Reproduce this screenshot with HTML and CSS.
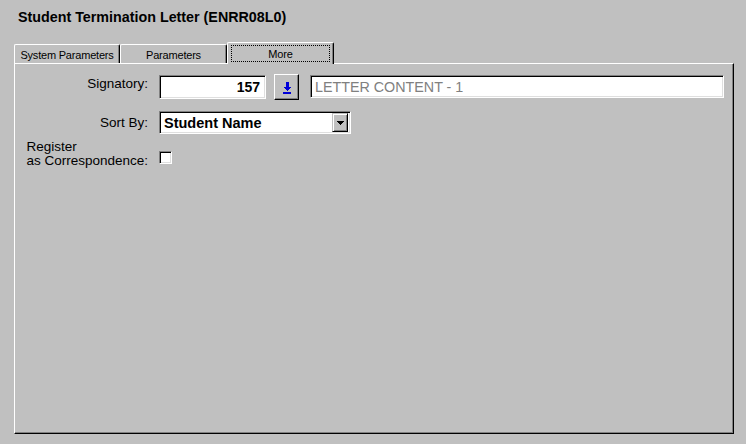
FILE: index.html
```html
<!DOCTYPE html>
<html lang="en">
<head>
    <meta charset="UTF-8">
    <title>Student Termination Letter (ENRR08L0)</title>
    <link rel="stylesheet" href="styles.css">
</head>
<body>
    <div class="window">
        <h1 class="title">Student Termination Letter (ENRR08L0)</h1>

        <div class="tabs">
            <div class="tab">System Parameters</div>
            <div class="tab tab-wide">Parameters</div>
            <div class="tab tab-wide active"><span class="focus">More</span></div>
        </div>

        <div class="panel">
            <!-- Signatory -->
            <div class="row row-top">
                <div class="label label-sig">Signatory:</div>
                <div class="field field-num">157</div>
                <button class="lookup">
                    <svg viewBox="0 0 8 12" width="8" height="12" shape-rendering="crispEdges">
                        <rect x="2.5" y="0" width="3" height="5" fill="#0000d8"/>
                        <polygon points="0,5 8,5 4,9" fill="#0000d8"/>
                        <rect x="0" y="10" width="8" height="2" fill="#0000d8"/>
                    </svg>
                </button>
                <div class="field field-desc">LETTER CONTENT - 1</div>
            </div>

            <!-- Sort -->
            <div class="row row-sort">
                <div class="label">Sort By:</div>
                <div class="field select">
                    <span class="select-value">Student Name</span>
                    <span class="select-btn">
                        <svg viewBox="0 0 7 4" width="7" height="4" shape-rendering="crispEdges">
                            <polygon points="0,0 7,0 3.5,4" fill="#000"/>
                        </svg>
                    </span>
                </div>
            </div>

            <!-- Register -->
            <div class="row row-check">
                <div class="label label-multi">Register<br>as Correspondence:</div>
                <span class="checkbox"></span>
            </div>
        </div>
    </div>
</body>
</html>
```

FILE: styles.css
```css
:root {
    --face: #c0c0c0;
    --shadow: #808080;
    --dark: #000000;
    --light: #ffffff;
    --text: #000000;
}
html, body {
    margin: 0;
    padding: 0;
    height: 100%;
}
body {
    background-color: var(--face);
    color: var(--text);
    font-family: 'Liberation Sans', Arial, sans-serif;
}
.window {
    height: 100%;
    display: flex;
    flex-direction: column;
    box-sizing: border-box;
    padding: 0 12px 10px 14px;
}
.title {
    margin: 0;
    padding: 10px 0 0 4px;
    font-size: 14.3px;
    line-height: 15px;
    font-weight: bold;
}

/* tabs */
.tabs {
    display: flex;
    align-items: flex-end;
    height: 21px;
    margin-top: 17px;
}
.tab {
    width: 106px;
    height: 19px;
    box-sizing: border-box;
    border-top: 1px solid var(--light);
    border-left: 1px solid var(--light);
    border-right: 1px solid var(--dark);
    border-radius: 2px 2px 0 0;
    box-shadow: inset -1px 0 0 var(--shadow);
    font-size: 11px;
    letter-spacing: -0.2px;
    display: flex;
    align-items: center;
    justify-content: center;
    padding-top: 1px;
}
.tab-wide {
    width: 107px;
}
.tab.active {
    height: 22px;
    margin-bottom: -1px;
    position: relative;
    z-index: 1;
    background-color: var(--face);
    align-items: flex-start;
    padding: 2px 3px 0 3px;
}
.focus {
    flex: 1;
    height: 17px;
    box-sizing: border-box;
    border: 1px dotted var(--dark);
    display: flex;
    align-items: center;
    justify-content: center;
}

/* panel */
.panel {
    flex: 1;
    box-sizing: border-box;
    border-top: 1px solid var(--light);
    border-left: 1px solid var(--light);
    border-right: 1px solid var(--dark);
    border-bottom: 1px solid var(--dark);
    box-shadow: inset -1px -1px 0 var(--shadow);
    padding-top: 10px;
}
.row {
    display: flex;
}
.row-top {
    align-items: flex-start;
}
.row-sort {
    align-items: center;
    margin-top: 11px;
}
.row-check {
    align-items: flex-end;
    margin-top: 6px;
}
.label {
    width: 133px;
    margin-right: 11px;
    font-size: 13.5px;
    line-height: 15px;
    text-align: right;
    flex-shrink: 0;
}
.label-sig {
    margin-top: 2px;
}
.label-multi {
    display: flex;
    justify-content: flex-end;
    text-align: left;
    line-height: 14px;
}

/* sunken fields */
.field {
    box-sizing: border-box;
    background-color: var(--light);
    border-top: 1px solid var(--shadow);
    border-left: 1px solid var(--shadow);
    border-right: 1px solid var(--light);
    border-bottom: 1px solid var(--light);
    box-shadow: inset 1px 1px 0 var(--dark), inset -1px -1px 0 #dfdfdf;
    font-size: 14px;
    line-height: 20px;
}
.field-num {
    width: 107px;
    height: 24px;
    margin-top: 1px;
    padding: 1px 5px 0 0;
    text-align: right;
    font-weight: bold;
}
.field-desc {
    width: 414px;
    height: 23px;
    margin-top: 1px;
    margin-left: 11px;
    padding: 1px 0 0 4px;
    color: var(--shadow);
    font-size: 14.3px;
}
.lookup {
    width: 25px;
    height: 26px;
    margin: 0 0 0 8px;
    padding: 0;
    box-sizing: border-box;
    background-color: var(--face);
    border-top: 1px solid var(--light);
    border-left: 1px solid var(--light);
    border-right: 1px solid var(--dark);
    border-bottom: 1px solid var(--dark);
    box-shadow: inset -1px -1px 0 var(--shadow);
    display: flex;
    align-items: center;
    justify-content: center;
}
.lookup svg {
    display: block;
    margin-top: 1px;
}

/* select */
.select {
    width: 192px;
    height: 23px;
    display: flex;
    align-items: center;
    justify-content: space-between;
    padding: 0 2px 0 4px;
    font-weight: bold;
    font-size: 14.5px;
}
.select-btn {
    width: 16px;
    height: 19px;
    box-sizing: border-box;
    background-color: var(--face);
    border-top: 1px solid var(--face);
    border-left: 1px solid var(--face);
    border-right: 1px solid var(--dark);
    border-bottom: 1px solid var(--dark);
    box-shadow: inset 1px 1px 0 var(--light), inset -1px -1px 0 var(--shadow);
    display: flex;
    align-items: center;
    justify-content: center;
}
.select-btn svg {
    display: block;
}

/* checkbox */
.checkbox {
    width: 13px;
    height: 13px;
    margin-bottom: 4px;
    box-sizing: border-box;
    background-color: var(--light);
    border-top: 1px solid var(--shadow);
    border-left: 1px solid var(--shadow);
    border-right: 1px solid var(--light);
    border-bottom: 1px solid var(--light);
    box-shadow: inset 1px 1px 0 var(--dark), inset -1px -1px 0 #dfdfdf;
}
```
